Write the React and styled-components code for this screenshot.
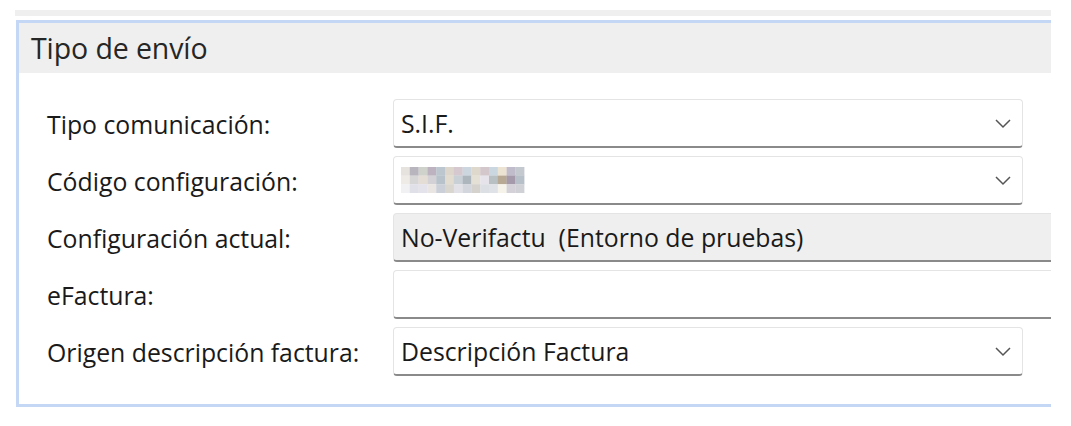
import React from 'react';
import styled, { createGlobalStyle } from 'styled-components';

const GlobalStyle = createGlobalStyle`
  html, body {
    margin: 0;
    padding: 0;
    background: #ffffff;
  }
  body {
    font-family: 'Open Sans', 'Noto Sans', sans-serif;
  }
`;

const Page = styled.div`
  width: 1036px;
  padding: 10px 0 0 15px;
  overflow: hidden;
`;

const TopStrip = styled.div`
  height: 6px;
  background: #efefef;
  margin-bottom: 4px;
`;

const Panel = styled.section`
  border: 3px solid #c4d8f6;
  border-right: none;
  margin-left: 1px;
  margin-right: -40px;
`;

const Header = styled.div`
  height: 50px;
  display: flex;
  align-items: center;
  padding-left: 12px;
  background: #efefef;
  color: #262626;
  font-size: 28.5px;
  letter-spacing: -0.1px;
`;

const Body = styled.div`
  display: flex;
  flex-direction: column;
  gap: 8px;
  padding: 26px 0 28px 28px;
`;

const Row = styled.div`
  display: grid;
  grid-template-columns: 346px 1fr;
  align-items: center;
`;

const Label = styled.label`
  font-size: 24.8px;
  color: #1a1a1a;
  white-space: nowrap;
`;

const Field = styled.div`
  box-sizing: border-box;
  height: 49px;
  width: ${p => (p.$select ? '630px' : '700px')};
  display: flex;
  align-items: center;
  justify-content: space-between;
  padding: 0 10px 0 7px;
  background: ${p => (p.$readonly ? '#efefef' : '#ffffff')};
  border: 1px solid #e4e4e4;
  border-bottom: 2px solid #8a8a8a;
  border-radius: 4px;
  font-size: 24.8px;
  color: #1a1a1a;
  white-space: nowrap;
`;

const Chevron = () => (
  <svg width="18" height="11" viewBox="0 0 18 11">
    <path d="M2 2 L9 9 L16 2" fill="none" stroke="#555555" strokeWidth="1.5" />
  </svg>
);

const mosaic = [
  ['#e6e2de', '#b9b5bf', '#cfd1cb', '#bdb3c0', '#bcc6cf', '#dcd6cc', '#d5c9cf', '#cbd6de', '#ded8cc', '#d3c7cc', '#cbd7e0', '#ede3d3', '#c0bccb', '#c3c9cf'],
  ['#eeeae6', '#d6d6d6', '#e3ddd6', '#d3d1d5', '#b7c2cb', '#e2dbcf', '#c9d0d6', '#adb5bd', '#e4e0d6', '#e6e4ea', '#b9c0c4', '#b7a994', '#a59aab', '#b7bfc8'],
  ['#f1f0f3', '#e0e0e8', '#e4e2ea', '#e9e5e3', '#cbd0d8', '#d9d5cf', '#e2e1e8', '#d3d6dd', '#d5d1cc', '#dcdfe3', '#dfe2e7', '#f6f3ea', '#d5d1d9', '#cfd1d6'],
];

const Blurred = () => (
  <svg width="124" height="26" viewBox="0 0 124 26" style={{ display: 'block' }}>
    {mosaic.map((row, r) =>
      row.map((c, i) => (
        <rect key={`${r}-${i}`} x={i * 8.8} y={r * 8.6} width="9" height="8.8" fill={c} />
      ))
    )}
  </svg>
);

const rows = [
  { label: 'Tipo comunicación:', value: 'S.I.F.', select: true },
  { label: 'Código configuración:', value: <Blurred />, select: true },
  { label: 'Configuración actual:', value: 'No-Verifactu\u00a0 (Entorno de pruebas)', readonly: true },
  { label: 'eFactura:', value: '' },
  { label: 'Origen descripción factura:', value: 'Descripción Factura', select: true },
];

export default function App() {
  return (
    <>
      <GlobalStyle />
      <Page>
        <TopStrip />
        <Panel>
          <Header>Tipo de envío</Header>
          <Body>
            {rows.map(r => (
              <Row key={r.label}>
                <Label>{r.label}</Label>
                <Field $select={r.select} $readonly={r.readonly}>
                  <span>{r.value}</span>
                  {r.select && <Chevron />}
                </Field>
              </Row>
            ))}
          </Body>
        </Panel>
      </Page>
    </>
  );
}
